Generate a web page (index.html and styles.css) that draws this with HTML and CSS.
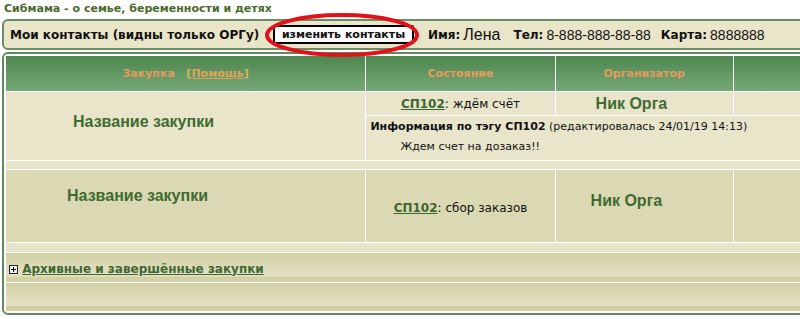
FILE: index.html
```html
<!DOCTYPE html>
<html lang="ru">
  <head>
    <meta charset="UTF-8" />
    <title>Сибмама - Мои закупки</title>
    <link rel="stylesheet" href="styles.css">
  </head>
  <body>
    <div class="page">
      <div class="site-title">Сибмама - о семье, беременности и детях</div>

      <!-- Контакты -->
      <div class="contacts">
        <span class="contacts-title">Мои контакты (видны только ОРГу)</span>
        <button class="edit-btn">изменить контакты</button>
        <span class="lbl">Имя:</span><span class="val val-name">Лена</span>
        <span class="lbl">Тел:</span><span class="val">8-888-888-88-88</span>
        <span class="lbl">Карта:</span><span class="val">8888888</span>
        <svg class="circle-mark" width="164" height="50" viewBox="0 0 164 50">
          <ellipse cx="80" cy="24" rx="75" ry="20" fill="none" stroke="#e3111b" stroke-width="4" />
        </svg>
      </div>

      <!-- Закупки -->
      <div class="box">
        <table class="buys">
          <colgroup>
            <col class="c-name" />
            <col class="c-state" />
            <col class="c-org" />
            <col class="c-more" />
          </colgroup>
          <tr class="head">
            <th>Закупка &nbsp; <span class="help">[<a href="#">Помощь</a>]</span></th>
            <th>Состояние</th>
            <th>Организатор</th>
            <th>Собрано</th>
          </tr>
          <tr class="row1 row1-top">
            <td rowspan="2" class="name name-1">Название закупки</td>
            <td class="state"><a href="#" class="tag">СП102</a>: ждём счёт</td>
            <td class="org org-1">Ник Орга</td>
            <td></td>
          </tr>
          <tr class="row1 row1-info">
            <td colspan="3" class="info">
              <div><b>Информация по тэгу СП102</b> (редактировалась 24/01/19 14:13)</div>
              <div class="info-text">Ждем счет на дозаказ!!</div>
            </td>
          </tr>
          <tr class="gap"><td colspan="4"></td></tr>
          <tr class="row2">
            <td class="name name-2">Название закупки</td>
            <td class="state state-2"><a href="#" class="tag">СП102</a>: сбор заказов</td>
            <td class="org org-2">Ник Орга</td>
            <td></td>
          </tr>
          <tr class="gap gap-2"><td colspan="4"></td></tr>
          <tr class="bar">
            <td colspan="4" class="archive">
              <svg class="plus" width="9" height="9" viewBox="0 0 9 9">
                <rect x="0.5" y="0.5" width="8" height="8" fill="#f4f4f4" stroke="#222" />
                <path d="M2 4.5h5M4.5 2v5" stroke="#000" stroke-width="1" />
              </svg>
              <a href="#">Архивные и завершённые закупки</a>
            </td>
          </tr>
          <tr class="bar bar-end"><td colspan="4"></td></tr>
        </table>
      </div>
    </div>
  </body>
</html>
```

FILE: styles.css
```css
html,
body {
  margin: 0;
  padding: 0;
  overflow: hidden;
  background-color: #fff;
}

body {
  font-family: "DejaVu Sans", Verdana, sans-serif;
}

.page {
  width: 1000px;
  padding-left: 2px;
}

.site-title {
  font-size: 11px;
  font-weight: bold;
  color: #4b6a2c;
  line-height: 14px;
  padding: 2px 0 0 2px;
  height: 17px;
}

/* Мои контакты */
.contacts {
  position: relative;
  display: flex;
  align-items: center;
  height: 27px;
  border: 2px solid #6a8e64;
  border-radius: 6px;
  background-color: #e9e5c9;
  padding-left: 6px;
}

.contacts-title {
  font-size: 12px;
  font-weight: bold;
  color: #111;
  width: 263px;
}

.edit-btn {
  font-family: "DejaVu Sans", Verdana, sans-serif;
  font-size: 11px;
  font-weight: bold;
  color: #111;
  background-color: #fbfbfb;
  border: 2px solid #000;
  border-radius: 2px;
  height: 19px;
  width: 141px;
  padding: 0;
  margin-right: 14px;
}

.lbl {
  font-size: 12px;
  font-weight: bold;
  color: #111;
  margin-right: 3px;
}

.val {
  font-family: "Liberation Sans", Arial, sans-serif;
  font-size: 14px;
  color: #111;
  margin-right: 10px;
}

.val-name {
  font-size: 16px;
  margin-right: 13px;
}

.circle-mark {
  position: absolute;
  left: 258px;
  top: -10px;
}

/* Таблица закупок */
.box {
  margin-top: 2px;
  border: 2px solid #5f8a5e;
  border-radius: 6px;
  padding: 1px;
  background-color: #fff;
}

.buys {
  table-layout: fixed;
  border-collapse: separate;
  border-spacing: 1px;
  width: 930px;
}

.buys td,
.buys th {
  padding: 0;
}

.c-name { width: 359px; }
.c-state { width: 188px; }
.c-org { width: 177px; }
.c-more { width: 200px; }

.head {
  height: 35px;
}

.head th {
  background: linear-gradient(#4e864f, #76a877);
  color: #e69a5c;
  font-size: 11px;
  font-weight: bold;
  text-align: center;
}

.help {
  color: #d9b45c;
}

.help a {
  color: #e3a257;
}

.row1 td {
  background-color: #e8e5cb;
}

.row1-top {
  height: 23px;
}

.row1-info {
  height: 44px;
}

.row2 {
  height: 72px;
}

.row2 td {
  background-color: #dbd9b3;
}

.name {
  font-family: "Liberation Sans", Arial, sans-serif;
  font-size: 16px;
  font-weight: bold;
  color: #3f6b31;
  vertical-align: top;
  line-height: 20px;
}

.name-1 {
  padding: 20px 0 0 67px !important;
}

.name-2 {
  padding: 16px 0 0 61px !important;
}

.state {
  font-size: 12px;
  color: #111;
  text-align: center;
}

.state-2 {
  padding-top: 3px !important;
}

.tag {
  color: #3d6630;
  font-weight: bold;
}

.org {
  font-family: "Liberation Sans", Arial, sans-serif;
  font-size: 16px;
  font-weight: bold;
  color: #3f6b31;
}

.org-1 {
  padding-left: 40px !important;
}

.org-2 {
  padding: 22px 0 0 35px !important;
  vertical-align: top;
  line-height: 18px;
}

.info {
  font-size: 11px;
  color: #111;
  line-height: 20px;
  padding: 1px 0 0 4px !important;
  vertical-align: top;
}

.info-text {
  padding-left: 30px;
}

.gap {
  height: 8px;
}

.gap td {
  background-color: #e7e5c9;
}

.gap-2 {
  height: 9px;
}

.bar {
  height: 29px;
}

.bar td {
  background: linear-gradient(#d2d0a4 0%, #dedcb9 50%, #e3e1c3 80%, #d2d0a4 84%, #d2d0a4 100%);
}

.bar-end {
  height: 28px;
}

.archive {
  padding-left: 3px !important;
  padding-top: 2px !important;
  font-size: 12px;
  font-weight: bold;
}

.archive a {
  color: #3d6630;
}

.plus {
  vertical-align: -1px;
}
```
